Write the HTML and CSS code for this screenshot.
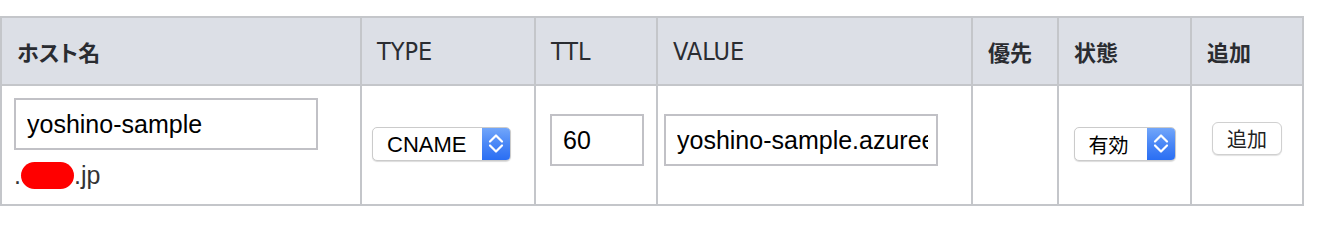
FILE: index.html
```html
<!DOCTYPE html>
<html lang="ja">
<head>
<meta charset="utf-8">
<title>DNS</title>
<link rel="stylesheet" href="styles.css">
</head>
<body>
<table class="dns">
  <thead>
    <tr>
      <th class="col-host"><span class="ja">ホスト名</span></th>
      <th class="col-type">TYPE</th>
      <th class="col-ttl">TTL</th>
      <th class="col-value">VALUE</th>
      <th class="col-prio"><span class="ja">優先</span></th>
      <th class="col-state"><span class="ja">状態</span></th>
      <th class="col-add"><span class="ja">追加</span></th>
    </tr>
  </thead>
  <tbody>
    <tr>
      <td class="cell-host">
        <input class="field field-host" type="text" value="yoshino-sample">
        <div class="domain">.<span class="redact"></span>.jp</div>
      </td>
      <td class="cell-type">
        <div class="picker picker-type">
          <select class="picker-select"><option>CNAME</option></select>
          <span class="stepper">
            <svg width="28" height="32" viewBox="0 0 28 32"><polyline points="8,13.5 14,7.5 20,13.5"/><polyline points="8,17.5 14,23.5 20,17.5"/></svg>
          </span>
        </div>
      </td>
      <td class="cell-ttl">
        <input class="field field-ttl" type="text" value="60">
      </td>
      <td class="cell-value">
        <input class="field field-value" type="text" value="yoshino-sample.azureedge.net">
      </td>
      <td class="cell-prio"></td>
      <td class="cell-state">
        <div class="picker picker-state">
          <select class="picker-select picker-ja"><option>有効</option></select>
          <span class="stepper">
            <svg width="28" height="32" viewBox="0 0 28 32"><polyline points="8,13.5 14,7.5 20,13.5"/><polyline points="8,17.5 14,23.5 20,17.5"/></svg>
          </span>
        </div>
      </td>
      <td class="cell-add">
        <button class="add-btn" type="button">追加</button>
      </td>
    </tr>
  </tbody>
</table>
</body>
</html>
```
FILE: styles.css
```css
html, body {
  margin: 0;
  padding: 0;
  background: #ffffff;
}

body {
  font-family: "Liberation Sans", Arial, "Noto Sans CJK JP", sans-serif;
  color: #303133;
}

.dns {
  margin-top: 16px;
  width: 1304px;
  table-layout: fixed;
  border-collapse: separate;
  border-spacing: 0;
  border-top: 2px solid #c4c6ca;
  border-left: 2px solid #c4c6ca;
}

.dns th,
.dns td {
  box-sizing: border-box;
  border-right: 2px solid #c4c6ca;
  border-bottom: 2px solid #c4c6ca;
  vertical-align: middle;
}

.dns th {
  height: 68px;
  padding: 0 15px;
  background: #dcdfe6;
  text-align: left;
  font-family: "DejaVu Sans Condensed", "DejaVu Sans", "Noto Sans CJK JP", sans-serif;
  font-stretch: condensed;
  font-size: 25px;
  font-weight: normal;
  color: #2a2c31;
  white-space: nowrap;
}

.dns th .ja {
  font-family: "Noto Sans CJK JP", sans-serif;
  font-stretch: normal;
  font-weight: bold;
  font-size: 22px;
  font-feature-settings: "palt";
}

.col-host { width: 360px; }
.col-type { width: 174px; }
.col-ttl { width: 122px; }
.col-value { width: 315px; }
.col-prio { width: 86px; }
.col-state { width: 133px; }
.col-add { width: 112px; }

.dns td {
  height: 120px;
  padding: 12px 0 10px 0;
  background: #ffffff;
}

.cell-host { padding-left: 12px !important; }
.cell-type { padding-left: 10px !important; }
.cell-ttl { padding-left: 14px !important; }
.cell-value { padding-left: 6px !important; }

.field {
  display: block;
  box-sizing: border-box;
  height: 52px;
  margin: 0 0 12px 0;
  border: 2px solid #c1c1c6;
  border-radius: 0;
  padding: 0 8px 0 11px;
  font-family: "Liberation Sans", Arial, sans-serif;
  font-size: 25px;
  color: #000000;
  background: #ffffff;
  outline: none;
}

.field-host {
  width: 304px;
  margin: 0;
}

.field-ttl {
  width: 94px;
}

.field-value {
  width: 274px;
}

.domain {
  margin-top: 6px;
  line-height: 38px;
  font-size: 25px;
  color: #333333;
  white-space: nowrap;
}

.redact {
  display: inline-block;
  width: 53px;
  height: 27px;
  border-radius: 14px;
  background: #ff0000;
  vertical-align: -5px;
}

.picker {
  display: flex;
  box-sizing: border-box;
  height: 34px;
  margin-bottom: 4px;
  border: 1px solid #cbcbcb;
  border-radius: 5px;
  background: #ffffff;
  box-shadow: 0 1px 1px rgba(0, 0, 0, 0.14);
  overflow: hidden;
}

.picker-type {
  width: 139px;
}

.picker-state {
  width: 102px;
  margin-left: auto;
  margin-right: auto;
}

.picker-select {
  flex: 1;
  min-width: 0;
  -webkit-appearance: none;
  appearance: none;
  border: 0;
  margin: 0;
  background: transparent;
  padding: 0 0 0 14px;
  font-family: "Liberation Sans", Arial, sans-serif;
  font-size: 22px;
  color: #000000;
  outline: none;
}

.picker-ja {
  font-family: "Noto Sans CJK JP", sans-serif;
  font-size: 20px;
}

.stepper {
  display: flex;
  align-items: center;
  justify-content: center;
  width: 28px;
  flex: none;
  background: linear-gradient(to bottom, #72a6fa 0%, #4a87f6 50%, #2a6ef3 100%);
}

.stepper svg polyline {
  fill: none;
  stroke: #ffffff;
  stroke-width: 2.2;
  stroke-linecap: round;
  stroke-linejoin: round;
}

.add-btn {
  display: block;
  box-sizing: border-box;
  width: 70px;
  height: 33px;
  margin: 0 auto 15px auto;
  padding: 0;
  border: 1px solid #d0d0d0;
  border-radius: 6px;
  background: #ffffff;
  box-shadow: 0 1px 1px rgba(0, 0, 0, 0.12);
  font-family: "Noto Sans CJK JP", sans-serif;
  font-size: 20px;
  color: #222222;
}
```
